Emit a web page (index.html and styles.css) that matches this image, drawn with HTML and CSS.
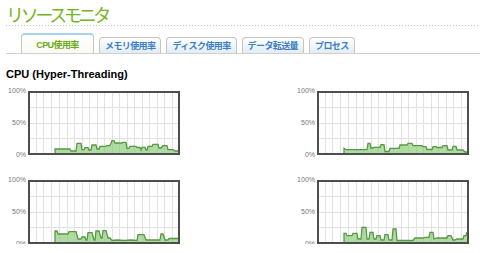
FILE: index.html
```html
<!DOCTYPE html>
<html lang="ja">
<head>
<meta charset="utf-8">
<title>リソースモニタ</title>
<link rel="stylesheet" href="styles.css">
</head>
<body>
<div class="page">
  <h1 class="title">リソースモニタ</h1>
  <div class="rule"></div>
  <div class="tabs">
    <div class="tab active">CPU使用率</div>
    <div class="tab">メモリ使用率</div>
    <div class="tab">ディスク使用率</div>
    <div class="tab">データ転送量</div>
    <div class="tab">プロセス</div>
  </div>
  <h2 class="section">CPU (Hyper-Threading)</h2>
  <div class="charts">
    <div class="chart">
      <div class="axis"><span>100%</span><span>50%</span><span>0%</span></div>
      <svg class="plot" width="152" height="64" viewBox="0 0 152 64">
        <path class="grid" d="M8.5 2V62M15.5 2V62M23.5 2V62M31.5 2V62M39.5 2V62M46.5 2V62M54.5 2V62M61.5 2V62M69.5 2V62M76.5 2V62M84.5 2V62M91.5 2V62M99.5 2V62M106.5 2V62M114.5 2V62M121.5 2V62M129.5 2V62M136.5 2V62M144.5 2V62M2 16.5H150M2 32.5H150M2 47.5H150"/>
        <g transform="translate(0,62) scale(1,-1)">
          <polygon class="area" points="27,0 27,4 42,4 43,2 48,2 49,9.7 53,9.7 54,3.3 56,3.3 57,5.3 60,5.3 61,3 63,3 64,8 68,8 69,4 71,4 72,6.7 78,6.7 79,7.3 82,7.3 84,12.3 86,12.3 87,10 94,10 95,10.7 98,10.7 99,4.7 101,4.7 102,6.7 108,6.7 109,5.5 112,5.5 113,3 114,5.7 117,5.7 118,3 119,3 120,6.7 124,6.7 125,8.7 130,8.7 131,5 133,5 135,7.3 139,7.3 140,3.3 145,3.3 147,2 150,2 150,0"/>
          <polyline class="line" points="27,0 27,4 42,4 43,2 48,2 49,9.7 53,9.7 54,3.3 56,3.3 57,5.3 60,5.3 61,3 63,3 64,8 68,8 69,4 71,4 72,6.7 78,6.7 79,7.3 82,7.3 84,12.3 86,12.3 87,10 94,10 95,10.7 98,10.7 99,4.7 101,4.7 102,6.7 108,6.7 109,5.5 112,5.5 113,3 114,5.7 117,5.7 118,3 119,3 120,6.7 124,6.7 125,8.7 130,8.7 131,5 133,5 135,7.3 139,7.3 140,3.3 145,3.3 147,2 150,2"/>
        </g>
        <rect class="frame" x="1" y="1" width="150" height="62"/>
      </svg>
    </div>
    <div class="chart">
      <div class="axis"><span>100%</span><span>50%</span><span>0%</span></div>
      <svg class="plot" width="152" height="64" viewBox="0 0 152 64">
        <path class="grid" d="M8.5 2V62M15.5 2V62M23.5 2V62M31.5 2V62M39.5 2V62M46.5 2V62M54.5 2V62M61.5 2V62M69.5 2V62M76.5 2V62M84.5 2V62M91.5 2V62M99.5 2V62M106.5 2V62M114.5 2V62M121.5 2V62M129.5 2V62M136.5 2V62M144.5 2V62M2 16.5H150M2 32.5H150M2 47.5H150"/>
        <g transform="translate(0,62) scale(1,-1)">
          <polygon class="area" points="27,0 27,4.7 29,3.3 50,3.3 51,9.7 53,9.7 54,5 56,5 57,5.7 63,5.7 64,8.3 67,8.3 68,1.5 72,1.5 73,4.7 82,4.7 83,8 90,8 91,9.7 95,9.7 96,7.3 105,7.3 106,6.3 109,6.3 110,3.5 115,3.5 116,6.3 119,6.3 120,5.5 125,5.5 126,7.3 130,7.3 131,3 135,3 136,6.7 139,6.7 140,3 146,3 148,1 150,1 150,0"/>
          <polyline class="line" points="27,0 27,4.7 29,3.3 50,3.3 51,9.7 53,9.7 54,5 56,5 57,5.7 63,5.7 64,8.3 67,8.3 68,1.5 72,1.5 73,4.7 82,4.7 83,8 90,8 91,9.7 95,9.7 96,7.3 105,7.3 106,6.3 109,6.3 110,3.5 115,3.5 116,6.3 119,6.3 120,5.5 125,5.5 126,7.3 130,7.3 131,3 135,3 136,6.7 139,6.7 140,3 146,3 148,1 150,1"/>
        </g>
        <rect class="frame" x="1" y="1" width="150" height="62"/>
      </svg>
    </div>
    <div class="chart">
      <div class="axis"><span>100%</span><span>50%</span><span>0%</span></div>
      <svg class="plot" width="152" height="64" viewBox="0 0 152 64">
        <path class="grid" d="M8.5 2V62M15.5 2V62M23.5 2V62M31.5 2V62M39.5 2V62M46.5 2V62M54.5 2V62M61.5 2V62M69.5 2V62M76.5 2V62M84.5 2V62M91.5 2V62M99.5 2V62M106.5 2V62M114.5 2V62M121.5 2V62M129.5 2V62M136.5 2V62M144.5 2V62M2 16.5H150M2 32.5H150M2 47.5H150"/>
        <g transform="translate(0,62) scale(1,-1)">
          <polygon class="area" points="27,0 27,11 29,11 30,8 40,8 41,10.3 48,10.3 50,3 53,3 54,5 57,5 58,2 59,2 60,9.3 64,9.3 66,2 67,2 68,11 71,11 73,4 74,4 75,11.3 78,11.3 80,4 82,4 84,1.5 90,2 96,1.5 103,2 109,1.5 110,7.3 116,7.3 118,2 132,2 133,8 135,8 137,2 140,2 141,3.5 150,3.5 150,0"/>
          <polyline class="line" points="27,0 27,11 29,11 30,8 40,8 41,10.3 48,10.3 50,3 53,3 54,5 57,5 58,2 59,2 60,9.3 64,9.3 66,2 67,2 68,11 71,11 73,4 74,4 75,11.3 78,11.3 80,4 82,4 84,1.5 90,2 96,1.5 103,2 109,1.5 110,7.3 116,7.3 118,2 132,2 133,8 135,8 137,2 140,2 141,3.5 150,3.5"/>
        </g>
        <rect class="frame" x="1" y="1" width="150" height="62"/>
      </svg>
    </div>
    <div class="chart">
      <div class="axis"><span>100%</span><span>50%</span><span>0%</span></div>
      <svg class="plot" width="152" height="64" viewBox="0 0 152 64">
        <path class="grid" d="M8.5 2V62M15.5 2V62M23.5 2V62M31.5 2V62M39.5 2V62M46.5 2V62M54.5 2V62M61.5 2V62M69.5 2V62M76.5 2V62M84.5 2V62M91.5 2V62M99.5 2V62M106.5 2V62M114.5 2V62M121.5 2V62M129.5 2V62M136.5 2V62M144.5 2V62M2 16.5H150M2 32.5H150M2 47.5H150"/>
        <g transform="translate(0,62) scale(1,-1)">
          <polygon class="area" points="27,0 27,8.7 29,8.7 30,6.3 35,6.3 36,8.7 40,8.7 41,3 44,3 45,14.7 49,14.7 50,3 52,3 53,9.7 56,9.7 57,3 59,3 60,6.3 63,6.3 64,2 67,2 68,7.3 71,7.3 72,2 75,2 76,13 79,13 80,1.5 96,1.5 98,4 106,4 108,4.7 112,4.7 113,9.7 116,9.7 117,3 120,4 130,4 131,6.3 134,6.3 136,2 138,2 140,3 146,3 147,6.3 149,6.3 150,10 150,0"/>
          <polyline class="line" points="27,0 27,8.7 29,8.7 30,6.3 35,6.3 36,8.7 40,8.7 41,3 44,3 45,14.7 49,14.7 50,3 52,3 53,9.7 56,9.7 57,3 59,3 60,6.3 63,6.3 64,2 67,2 68,7.3 71,7.3 72,2 75,2 76,13 79,13 80,1.5 96,1.5 98,4 106,4 108,4.7 112,4.7 113,9.7 116,9.7 117,3 120,4 130,4 131,6.3 134,6.3 136,2 138,2 140,3 146,3 147,6.3 149,6.3 150,10"/>
        </g>
        <rect class="frame" x="1" y="1" width="150" height="62"/>
      </svg>
    </div>
  </div>
</div>
</body>
</html>
```

FILE: styles.css
```css
html, body {
  margin: 0;
  padding: 0;
  background: #ffffff;
}

body {
  font-family: "Liberation Sans", Arial, "Noto Sans CJK JP", sans-serif;
  color: #000;
}

.page {
  padding-left: 6px;
}

.title {
  margin: 0;
  height: 25px;
  font-family: "Noto Sans CJK JP", sans-serif;
  font-weight: 400;
  font-size: 18px;
  line-height: 28px;
  letter-spacing: -3.3px;
  color: #74b41c;
}

.rule {
  height: 1px;
  background: repeating-linear-gradient(to right, #c6c6b6 0 1px, transparent 1px 3px);
}

.tabs {
  display: flex;
  align-items: flex-end;
  gap: 5px;
  margin-top: 7px;
  padding-left: 15px;
  border-bottom: 1px solid #d0d0d0;
}

.tab {
  height: 15px;
  padding: 0 5px;
  border: 1px solid #c4c4c4;
  border-bottom: none;
  border-radius: 4px 4px 0 0;
  background: linear-gradient(#ffffff, #e3ecf3);
  color: #3c80c6;
  font-family: "Liberation Sans", Arial, "Noto Sans CJK JP", sans-serif;
  font-weight: 700;
  font-size: 9px;
  line-height: 16px;
  letter-spacing: -0.6px;
  text-align: center;
}

.tab.active {
  height: 18px;
  width: 61px;
  border-top: 2px solid #a8d2ef;
  background: linear-gradient(#ffffff, #fbfaf2);
  color: #6aab16;
  line-height: 20px;
}

.section {
  margin: 14px 0 0;
  font-size: 11px;
  font-weight: 700;
  line-height: 13px;
}

.charts {
  display: grid;
  grid-template-columns: 174px 174px;
  column-gap: 115px;
  row-gap: 25px;
  margin-top: 10px;
}

.chart {
  display: flex;
}

.axis {
  width: 20px;
  margin: -4px 2px -4px 0;
  display: flex;
  flex-direction: column;
  justify-content: space-between;
  align-items: flex-end;
  font-size: 7px;
  line-height: 8px;
  color: #777;
}

.plot {
  display: block;
}

.grid {
  stroke: #e2e2e2;
  stroke-width: 1;
  fill: none;
}

.area {
  fill: #86c872;
  fill-opacity: 0.65;
}

.line {
  fill: none;
  stroke: #559a43;
  stroke-width: 1.3;
}

.frame {
  fill: none;
  stroke: #4e4e4e;
  stroke-width: 2;
}
```
